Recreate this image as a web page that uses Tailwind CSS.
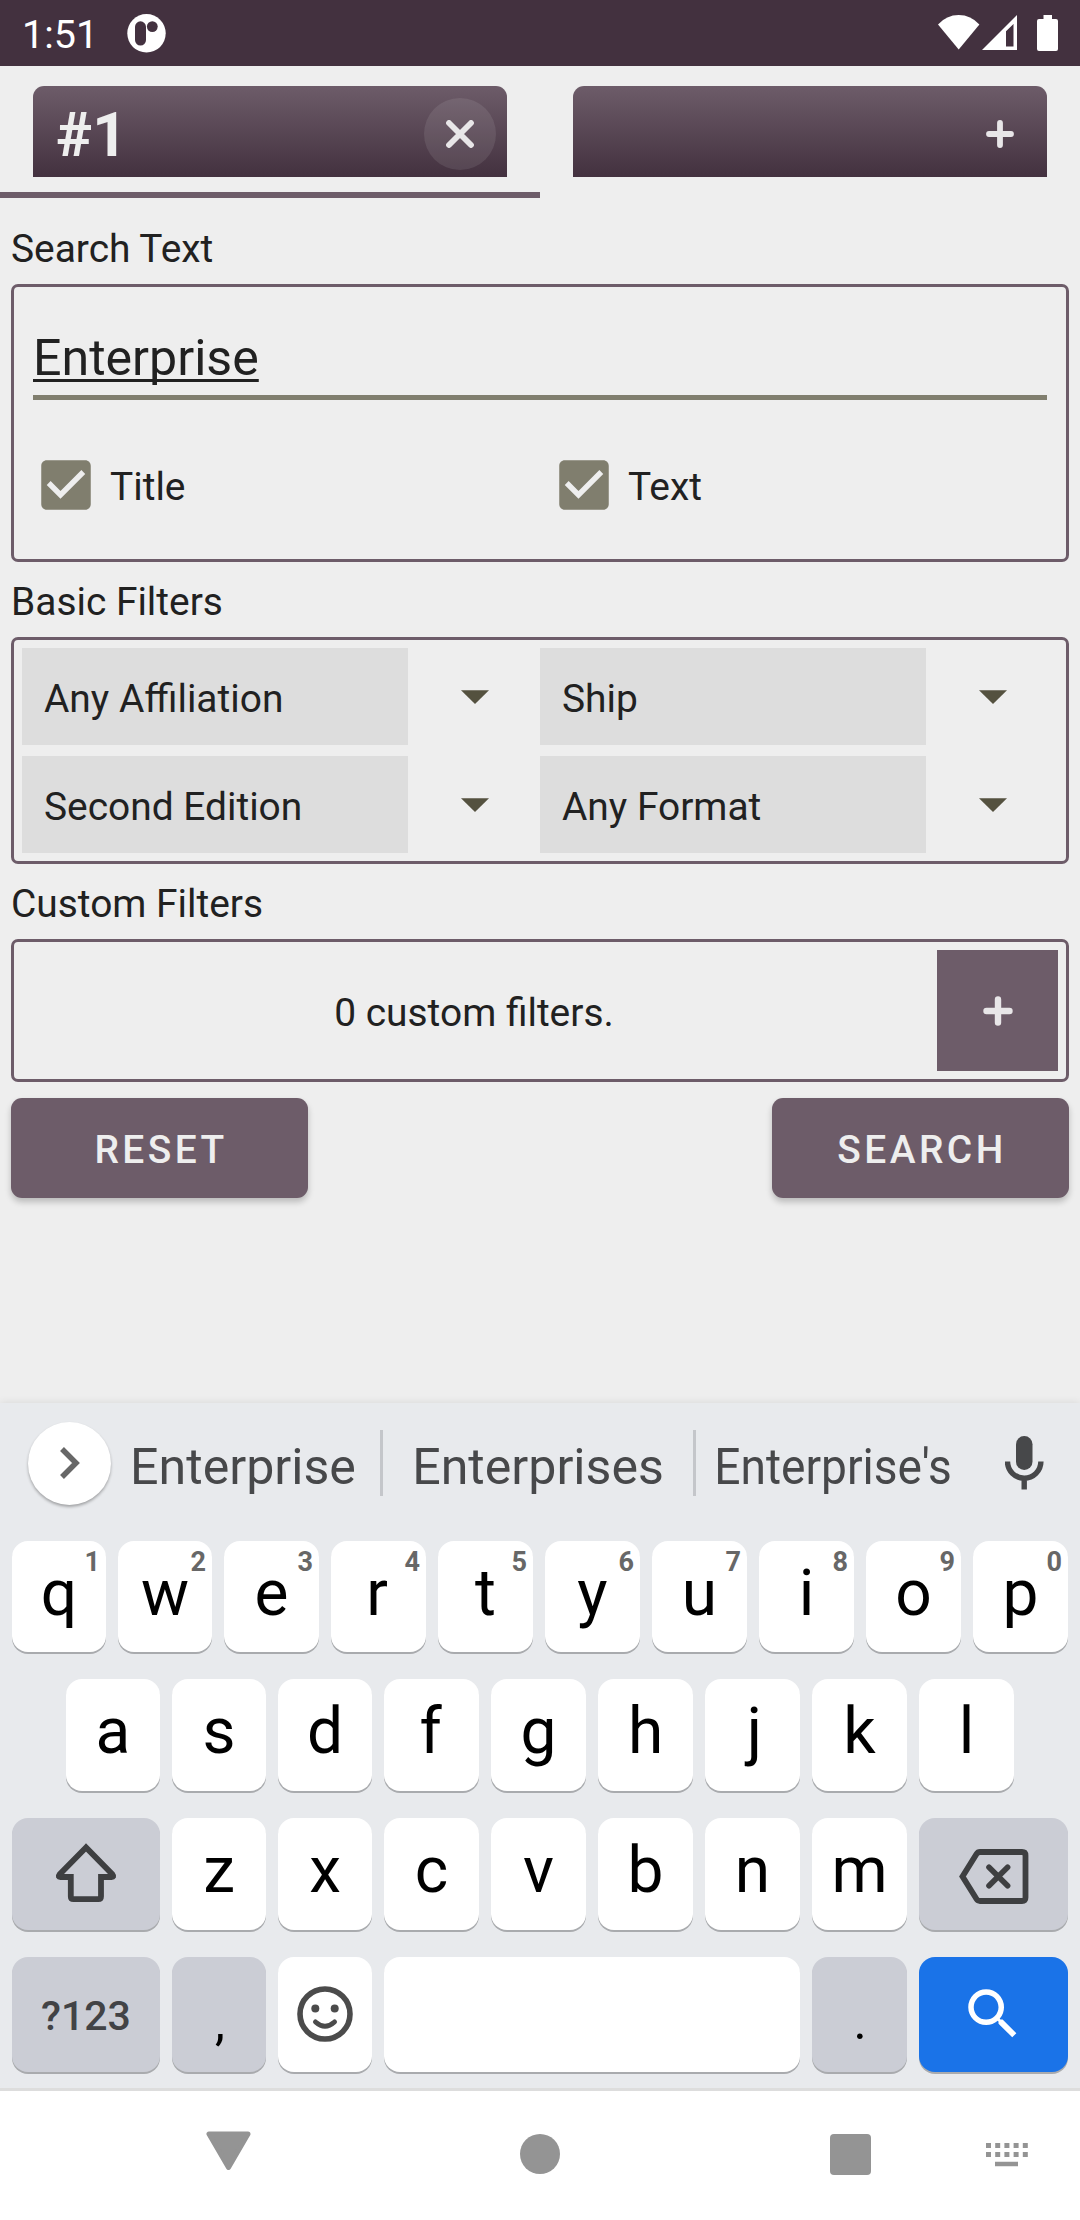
<!DOCTYPE html>
<html lang="en">
<head>
<meta charset="utf-8">
<title>Card Search</title>
<script src="https://cdn.jsdelivr.net/npm/@tailwindcss/browser@4"></script>
</head>
<body class="flex h-[2220px] w-[1080px] flex-col overflow-hidden bg-[#eee] font-[Roboto,sans-serif] text-[38.900px] leading-none text-[#212121]">

<!-- Status bar -->
<header class="flex h-[66px] shrink-0 items-start bg-[#43313f] pt-[14px] pr-[22px] pl-[22px] text-white">
  <span class="w-[105px] pt-[1px] text-[39.5px] leading-[39px]">1:51</span>
  <svg class="h-[39px] w-[39px]" viewBox="0 0 39 39"><circle cx="19.5" cy="19.3" r="19.2" fill="#fff"/><rect x="8" y="7.3" width="11" height="24.2" rx="5.5" fill="#43313f"/><circle cx="25.3" cy="12.6" r="5.4" fill="#43313f"/></svg>
  <svg class="ml-auto h-[36px] w-[42px]" viewBox="0 0 42 36"><path d="M0 10.5Q8.5 1 20.7 1T41.4 10.5L20.7 35.5z" fill="#fff"/></svg>
  <svg class="ml-[2px] h-[37px] w-[35px]" viewBox="0 0 35 37"><path fill-rule="evenodd" d="M35 1V36H0zM31.5 10L24 17.3V32.5H31.5z" fill="#fff"/></svg>
  <svg class="ml-[20px] h-[37px] w-[21px]" viewBox="0 0 21 37"><path d="M6.5 1h8.5v4h4a2 2 0 0 1 2 2v28a2 2 0 0 1-2 2H2a2 2 0 0 1-2-2V7a2 2 0 0 1 2-2h4.500z" fill="#fff"/></svg>
</header>

<!-- Tabs -->
<nav class="grid h-[132px] shrink-0 grid-cols-2">
  <div class="border-b-6 border-[#6d5c69] px-[33px] pt-5">
    <div class="flex h-[91px] items-center justify-between rounded-t-[11px] bg-linear-to-b/srgb from-[#6d5c69] to-[#43313f] pr-[11px] pl-[23px]">
      <span class="pt-[8px] text-[61px] font-bold text-[#eee]">#1</span>
      <span class="mt-[4px] flex size-[72px] items-center justify-center rounded-full bg-[#eee]/10">
        <svg class="size-[28px]" viewBox="0 0 28 28"><path d="M3 3L25 25M25 3L3 25" stroke="#e8e6e8" stroke-width="5.800" stroke-linecap="round"/></svg>
      </span>
    </div>
  </div>
  <div class="px-[33px] pt-5">
    <div class="flex h-[91px] items-center justify-end rounded-t-[11px] bg-linear-to-b/srgb from-[#6d5c69] to-[#43313f] pt-[4px] pr-[33px]">
      <svg class="size-[28px]" viewBox="0 0 28 28"><path d="M14 3V25M3 14H25" stroke="#e8e6e8" stroke-width="5.800" stroke-linecap="round"/></svg>
    </div>
  </div>
</nav>

<!-- Search form -->
<main class="flex flex-1 flex-col px-[11px] pt-[16px]">
  <h2 class="flex h-[70px] shrink-0 items-center">Search Text</h2>
  <section class="h-[278px] shrink-0 rounded-[7px] border-3 border-[#6d5c69] px-[19px] pt-[41px]">
    <div class="h-[72px] border-b-[5.500px] border-[#807e6e] pt-[1px]">
      <span class="text-[50.100px] leading-[59px] underline decoration-[3px] underline-offset-[4px] [text-decoration-skip-ink:none]">Enterprise</span>
    </div>
    <div class="mt-[52px] grid h-[66px] grid-cols-[518px_1fr]">
      <label class="flex items-center gap-[11px]">
        <svg class="size-[66px]" viewBox="0 0 24 24"><path fill="#807e6e" d="M19 3H5c-1.110 0-2 .9-2 2v14c0 1.100.89 2 2 2h14c1.110 0 2-.9 2-2V5c0-1.100-.89-2-2-2zM10 17l-5-5 1.410-1.410L10 14.170l7.590-7.590L19 8l-9 9z"/></svg>
        <span class="pt-[4px]">Title</span>
      </label>
      <label class="flex items-center gap-[11px]">
        <svg class="size-[66px]" viewBox="0 0 24 24"><path fill="#807e6e" d="M19 3H5c-1.110 0-2 .9-2 2v14c0 1.100.89 2 2 2h14c1.110 0 2-.9 2-2V5c0-1.100-.89-2-2-2zM10 17l-5-5 1.410-1.410L10 14.170l7.590-7.590L19 8l-9 9z"/></svg>
        <span class="pt-[4px]">Text</span>
      </label>
    </div>
  </section>

  <h2 class="flex h-[75px] shrink-0 items-center pt-[5px]">Basic Filters</h2>
  <section class="grid h-[227px] shrink-0 grid-cols-[518px_1fr] gap-y-[11px] rounded-[7px] border-3 border-[#6d5c69] p-2">
    <div class="flex items-center">
      <span class="flex h-[97px] w-[386px] items-center bg-[#ddd] pt-[5px] pl-[22px]">Any Affiliation</span>
      <svg class="ml-[52.500px] h-[14px] w-[28px]" viewBox="0 0 28 14"><path d="M0 .2H28L14 14z" fill="#54513f"/></svg>
    </div>
    <div class="flex items-center">
      <span class="flex h-[97px] w-[386px] items-center bg-[#ddd] pt-[5px] pl-[22px]">Ship</span>
      <svg class="ml-[52.500px] h-[14px] w-[28px]" viewBox="0 0 28 14"><path d="M0 .2H28L14 14z" fill="#54513f"/></svg>
    </div>
    <div class="flex items-center">
      <span class="flex h-[97px] w-[386px] items-center bg-[#ddd] pt-[5px] pl-[22px]">Second Edition</span>
      <svg class="ml-[52.500px] h-[14px] w-[28px]" viewBox="0 0 28 14"><path d="M0 .2H28L14 14z" fill="#54513f"/></svg>
    </div>
    <div class="flex items-center">
      <span class="flex h-[97px] w-[386px] items-center bg-[#ddd] pt-[5px] pl-[22px]">Any Format</span>
      <svg class="ml-[52.500px] h-[14px] w-[28px]" viewBox="0 0 28 14"><path d="M0 .2H28L14 14z" fill="#54513f"/></svg>
    </div>
  </section>

  <h2 class="flex h-[75px] shrink-0 items-center pt-[5px]">Custom Filters</h2>
  <section class="flex h-[143px] shrink-0 items-center rounded-[7px] border-3 border-[#6d5c69] p-2">
    <p class="w-[904px] pt-[6px] text-center">0 custom filters.</p>
    <button class="ml-auto flex size-[121px] items-center justify-center bg-[#6d5c69]">
      <svg class="size-[30px]" viewBox="0 0 30 30"><path d="M15 3.500V26.500M3.500 15H26.500" stroke="#e8e6e8" stroke-width="6.400" stroke-linecap="round"/></svg>
    </button>
  </section>

  <div class="mt-4 flex justify-between">
    <button class="h-[100px] w-[297px] rounded-[11px] bg-[#6d5c69] pt-[5px] pl-[3px] font-medium tracking-[3.440px] text-[#eee] shadow-[0_4px_6px_rgba(0,0,0,0.22)]">RESET</button>
    <button class="h-[100px] w-[297px] rounded-[11px] bg-[#6d5c69] pt-[5px] pl-[3px] font-medium tracking-[3.440px] text-[#eee] shadow-[0_4px_6px_rgba(0,0,0,0.22)]">SEARCH</button>
  </div>
</main>

<!-- Keyboard -->
<section class="flex h-[688px] shrink-0 flex-col border-b-3 border-[#ddd] bg-[#e8eaed] px-3 text-[64px] text-black shadow-[0_0_8px_rgba(0,0,0,0.1)]">
  <div class="-mx-3 flex h-[138px] shrink-0 items-center pb-[18px] text-[50.100px] text-[#47484a]">
    <button class="ml-[28px] flex size-[83px] items-center justify-center rounded-full bg-white shadow-[0_2px_3px_rgba(0,0,0,0.3)]">
      <svg class="h-[34px] w-[20px]" viewBox="0 0 20 34"><path d="M2 3L16 17L2 31" fill="none" stroke="#676767" stroke-width="5.500"/></svg>
    </button>
    <span class="w-[264px] pt-[8px] text-center">Enterprise</span>
    <i class="ml-[5px] h-[66px] w-[3px] bg-[#c4c6ca]"></i>
    <span class="w-[310px] pt-[8px] text-center">Enterprises</span>
    <i class="h-[66px] w-[3px] bg-[#c4c6ca]"></i>
    <span class="w-[274px] scale-x-[0.920] pt-[8px] text-center">Enterprise's</span>
    <svg class="ml-[35px] h-[54px] w-[39px]" viewBox="0 0 39 54"><rect x="11" y="0" width="16.500" height="34" rx="8.200" fill="#47484a"/><path d="M2.500 25.500a16.700 16.700 0 0 0 33.400 0M19.200 42V53.500" fill="none" stroke="#47484a" stroke-width="5.400"/></svg>
  </div>

  <div class="grid h-[111px] grid-cols-[94px_94px_95px_95px_95px_95px_95px_95px_95px_95px] gap-3 *:relative *:rounded-2xl *:bg-white *:pt-[5px] *:text-center *:leading-[95px] *:shadow-[0_2px_0_#a9abae] [&_sup]:absolute [&_sup]:top-[10px] [&_sup]:right-[6px] [&_sup]:text-[27px] [&_sup]:leading-[22px] [&_sup]:font-bold [&_sup]:text-[#676767]">
    <div>q<sup>1</sup></div><div>w<sup>2</sup></div><div>e<sup>3</sup></div><div class="pr-[3px]">r<sup>4</sup></div><div>t<sup>5</sup></div><div>y<sup>6</sup></div><div>u<sup>7</sup></div><div>i<sup>8</sup></div><div>o<sup>9</sup></div><div>p<sup>0</sup></div>
  </div>

  <div class="mx-[54px] mt-[27px] grid h-[112px] grid-cols-[94px_94px_94px_95px_95px_95px_95px_95px_95px] gap-3 *:rounded-2xl *:bg-white *:pt-[5px] *:text-center *:leading-[95px] *:shadow-[0_2px_0_#a9abae]">
    <div>a</div><div>s</div><div>d</div><div class="pr-[2px]">f</div><div>g</div><div>h</div><div class="pl-[4px]">j</div><div>k</div><div>l</div>
  </div>

  <div class="mt-[27px] grid h-[112px] grid-cols-[148px_94px_94px_95px_95px_95px_95px_95px_149px] gap-3 *:rounded-2xl *:text-center *:leading-[95px] *:shadow-[0_2px_0_#a9abae]">
    <div class="flex justify-center bg-[#cbcdd5] pt-[25px]">
      <svg class="h-[60px] w-[62px]" viewBox="0 0 62 60"><path d="M31 4.500L4.500 31.500Q2.500 34 5.500 34H15.800V53.500Q15.800 56.200 18.500 56.200H43.300Q46 56.200 46 53.500V34H56.500Q59.500 34 57.500 31.500Z" fill="none" stroke="#3e3f41" stroke-width="5.800"/></svg>
    </div>
    <div class="bg-white pt-[5px]">z</div><div class="bg-white pt-[5px]">x</div><div class="bg-white pt-[5px]">c</div><div class="bg-white pt-[5px]">v</div><div class="bg-white pt-[5px]">b</div><div class="bg-white pt-[5px]">n</div><div class="bg-white pt-[5px]">m</div>
    <div class="flex justify-center bg-[#cbcdd5] pt-[31px]">
      <svg class="h-[55px] w-[70px]" viewBox="0 0 70 55"><path d="M3.500 27.500L17.500 5Q18.800 3 21 3H63Q66.500 3 66.500 6.500V48.500Q66.500 52 63 52H21Q18.800 52 17.500 50Z" fill="none" stroke="#3e3f41" stroke-width="5.800"/><path d="M30 18.200L48.600 36.800M48.600 18.200L30 36.800" stroke="#3e3f41" stroke-width="5.600" stroke-linecap="round"/></svg>
    </div>
  </div>

  <div class="mt-[27px] grid h-[115px] grid-cols-[148px_94px_94px_416px_95px_149px] gap-3 *:rounded-2xl *:text-center *:shadow-[0_2px_0_#a9abae]">
    <div class="bg-[#cbcdd5] pt-[3px] text-[41px] leading-[112px] font-medium text-[#424346]">?123</div>
    <div class="bg-[#cbcdd5] pt-[34px] pl-[2px] text-[50px] leading-[62px]">,</div>
    <div class="flex items-center justify-center bg-white pb-[2px]">
      <svg class="size-[56px]" viewBox="0 0 56 56"><circle cx="28" cy="28" r="25" fill="none" stroke="#4b4b4b" stroke-width="5.600"/><circle cx="18.300" cy="22.500" r="4" fill="#4b4b4b"/><circle cx="37.700" cy="22.500" r="4" fill="#4b4b4b"/><path d="M18.500 36Q28 44.500 37.500 36" fill="none" stroke="#4b4b4b" stroke-width="5" stroke-linecap="round"/></svg>
    </div>
    <div class="bg-white"></div>
    <div class="bg-[#cbcdd5] pt-[34px] pl-[1px] text-[50px] leading-[62px]">.</div>
    <div class="flex bg-[#1a73e8] pt-[24px] pl-[41px]">
      <svg class="size-[66px]" viewBox="0 0 24 24"><path fill="#fff" d="M15.500 14h-.79l-.28-.27A6.471 6.471 0 0 0 16 9.500 6.500 6.500 0 1 0 9.500 16c1.610 0 3.090-.59 4.230-1.570l.27.28v.79l5 4.990L20.490 19l-4.990-5zm-6 0C7.010 14 5 11.990 5 9.500S7.010 5 9.500 5 14 7.010 14 9.500 11.990 14 9.500 14z"/></svg>
    </div>
  </div>
</section>

<!-- System navigation -->
<footer class="flex h-[129px] shrink-0 items-start bg-white pl-[206px]">
  <svg class="mt-[40px] h-[40px] w-[45px]" viewBox="0 0 45 40"><path d="M3 3H42L22.500 36.500Z" fill="#949494" stroke="#949494" stroke-width="5" stroke-linejoin="round"/></svg>
  <span class="mt-[43px] ml-[269px] size-[40px] rounded-full bg-[#949494]"></span>
  <span class="mt-[43px] ml-[270px] size-[41px] rounded-[4px] bg-[#949494]"></span>
  <svg class="mt-[52px] ml-[115px] h-[24px] w-[42px]" viewBox="0 0 42 24"><path d="M0 2.500H42M0 11.500H42" stroke="#949494" stroke-width="5" stroke-dasharray="5 4.200"/><path d="M9 21H32" stroke="#949494" stroke-width="4.500"/></svg>
</footer>
</body>
</html>
